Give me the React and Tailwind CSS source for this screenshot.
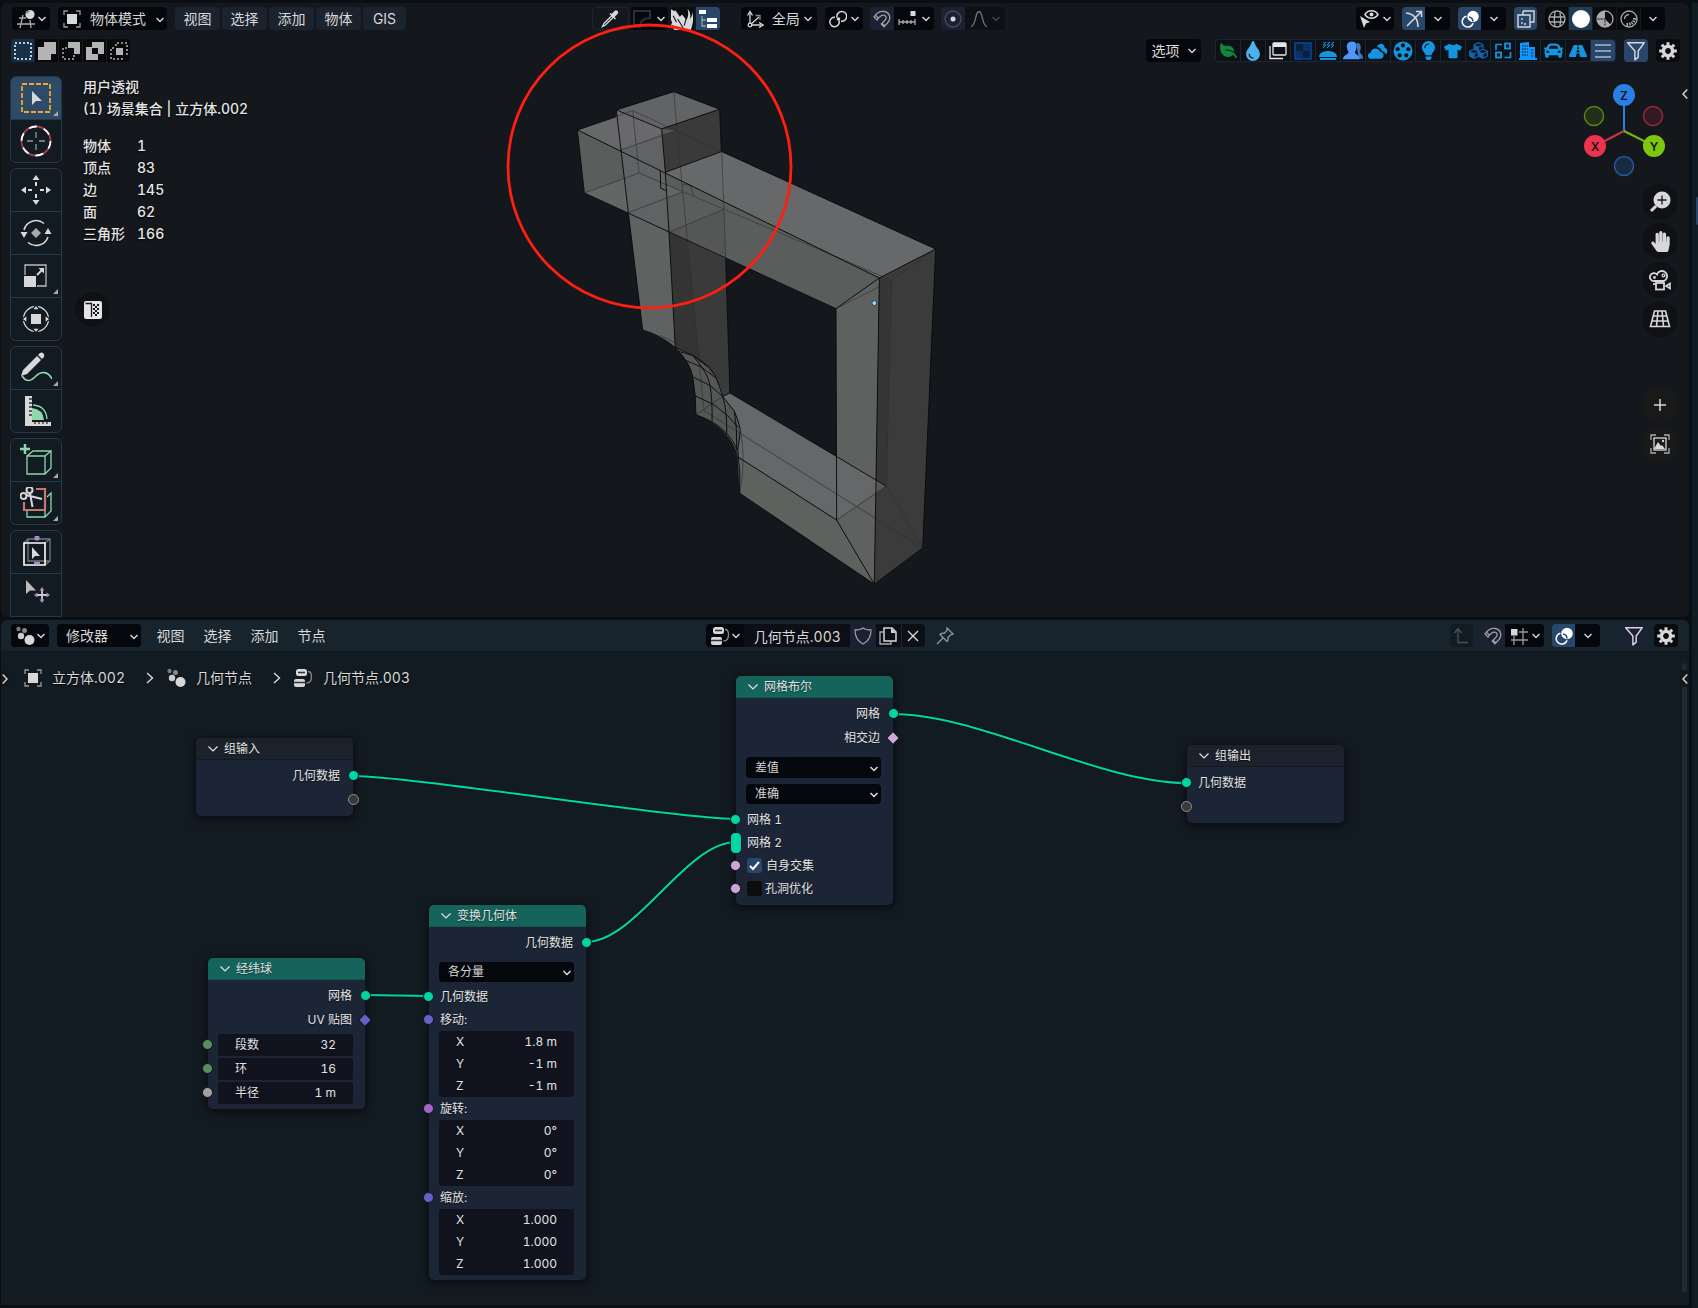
import React from "react";
import clsx from "clsx";
import { FaLeaf, FaTint, FaLightbulb, FaTshirt, FaCubes, FaCar, FaRoad, FaHandPaper } from "react-icons/fa";

/* ---------- icons ---------- */
function Svg({ children, size = "size-[18px]", box = 18, className, ...rest }) {
  return (
    <svg viewBox={`0 0 ${box} ${box}`} className={clsx(size, "shrink-0", className)} fill="none" stroke="currentColor" strokeWidth="1.3" aria-hidden="true" {...rest}>
      {children}
    </svg>
  );
}
const F = { fill: "currentColor", stroke: "none" };

const Chevron = ({ className }) => (
  <svg viewBox="0 0 8 6" className={clsx("h-[6px] w-2 shrink-0", className)} fill="none" stroke="currentColor" strokeWidth="1.4" aria-hidden="true">
    <path d="M.5 1 4 4.600 7.500 1" />
  </svg>
);
/* Handle that opens a hidden side region. */
const RegionArrow = ({ className }) => (
  <svg viewBox="0 0 6 10" className={clsx("h-[10px] w-[6px] shrink-0", className)} fill="none" stroke="currentColor" strokeWidth="1.4" aria-hidden="true">
    <path d="M5.300.600 1 5l4.300 4.400" />
  </svg>
);
const GridBall = () => (
  <Svg size="size-5" box={20}><path d="M3 9h7M1 15h18M7 6 4 19M14 11l1 8" stroke="#aaa" /><circle cx="14" cy="5.500" r="4.600" {...F} /><path d="M10.500 4.500a4 4 0 0 1 3-2.500" stroke="#777" /></Svg>
);
const ObjectIcon = () => (
  <Svg><rect x="4" y="4" width="10" height="10" {...F} /><path d="M1 5V1h4M13 1h4v4M17 13v4h-4M5 17H1v-4" stroke="#999" /></Svg>
);
const GeoNodesDots = () => (
  <Svg size="size-5" box={20}><circle cx="3.500" cy="3" r="2.200" fill="#777" stroke="none" /><circle cx="9.500" cy="4.500" r="2.500" fill="#888" stroke="none" /><circle cx="6" cy="10" r="3.200" fill="#ccc" stroke="none" /><circle cx="14.500" cy="14" r="5" {...F} /></Svg>
);
const NodeTree = () => (
  <Svg size="size-5" box={20}><rect x="3" y="1" width="11" height="7" rx="2.500" {...F} /><path d="M5 4.500h7" stroke="#333" /><rect x="1" y="11" width="11" height="8" rx="2" {...F} /><path d="M1 14.500h11" stroke="#333" /><path d="M15 3.500c3 0 3.500 2 3.500 5s-1 6.500-5 6.500" stroke="#888" /></Svg>
);
const Eyedropper = () => (
  <Svg><path d="M11 5.500 3 13.500 1.500 16.500l3-1.500 8-8" /><path d="m8.500 4 5.500 5.500 1-1-1.500-1.500 3-3a2 2 0 0 0-3-3l-3 3L9.500 3z" {...F} /></Svg>
);
const Axes = () => (
  <Svg><path d="M4 3v12h11" /><path d="M1.500 5.500 4 1.500l2.500 4M13 12.500l4 2.500-4 2.500M4 15l9-8" /><path d="M9.500 5.500h4.500V10" stroke="#888" /><circle cx="4" cy="15" r="1.800" fill="#05070a" /></Svg>
);
const Pivot = () => (
  <Svg><path d="M10 10.500A4.700 4.700 0 1 1 6 7.300M8 7.500A4.900 4.900 0 1 1 12 11.200" strokeWidth="1.500" /><circle cx="9.500" cy="9" r="1.800" {...F} /></Svg>
);
const Magnet = ({ className }) => (
  <Svg className={className}><path d="M1 7C4 2.500 7.500.800 11.500 1.500c5.500 1.300 7 7.500 3 11.500L11 16.800 8.300 14l3.700-3.800c2-2.200 1-4.700-1-5C8.500 4.800 6.500 6.500 4 10zM9 13.300l2.800 2.700M2.600 5.500l3 2.700" /></Svg>
);
const SnapIncrement = () => (
  <Svg><path d="M1 9v6M5 10v4M9 10v4M13 10v4M17 9v6M1 12h16" stroke="#aaa" /><rect x="12.500" y="1" width="5" height="5" {...F} /></Svg>
);
const SnapGrid = () => (
  <Svg><path d="M4 9v9M13 1v17M9 5h9M1 13h17" stroke="#999" /><rect x="1" y="2" width="6.500" height="6.500" {...F} /></Svg>
);
const Overlays = () => (
  <Svg><circle cx="12" cy="6.500" r="5.700" {...F} /><path d="M5.500 6.200a5.500 5.500 0 1 0 6.500 7" strokeWidth="1.500" /><path d="M8 7c2 0 4 2 4 4.500" stroke="#29476b" strokeWidth="1.500" /></Svg>
);
const Gear = () => (
  <Svg><path d="M9 4.400a4.600 4.600 0 1 0 0 9.200 4.600 4.600 0 0 0 0-9.200z" strokeWidth="3.400" /><path d="M9 .2v3M9 14.800v3M.2 9h3M14.800 9h3M2.800 2.800l2 2M13.200 13.200l2 2M15.200 2.800l-2 2M4.800 13.200l-2 2" strokeWidth="3" /></Svg>
);
const Funnel = () => <Svg size="size-5" box={18}><path d="M1.500 1.500h15L11 9v5.500L8 17V9z" strokeWidth="1.300" strokeLinejoin="round" /></Svg>;

/* ---------- header controls ---------- */
function Btn({ label, className, children }) {
  return (
    <button type="button" aria-label={label} className={clsx("flex h-[23px] items-center justify-center", className)}>
      {children}
    </button>
  );
}
function Group({ className, children }) {
  return <div className={clsx("flex h-[23px] shrink-0 overflow-hidden rounded", className)}>{children}</div>;
}
function Select({ label, value, className, selectClass, chevronClass }) {
  return (
    <div className={clsx("relative shrink-0", className)}>
      <select aria-label={label} defaultValue={value} className={clsx("h-full w-full appearance-none rounded bg-[#04070b] text-[#d5d5d5] outline-none", selectClass)}>
        <option>{value}</option>
      </select>
      <Chevron className={clsx("pointer-events-none absolute top-1/2 -mt-[2px]", chevronClass)} />
    </div>
  );
}

const menuA = ["视图", "选择", "添加", "物体"];
const menuB = ["视图", "选择", "添加", "节点"];

const selectModes = [
  ["新建", <path key="a" d="M1 1h16v16H1z" strokeDasharray="2 2" strokeWidth="1.500" stroke="#fff" />],
  ["扩展", <path key="b" d="M6 0h12v12h-5v6H0V5h6z" {...F} />],
  ["减去", <g key="c"><path d="M6 0h12v12h-6V6H6z" {...F} /><path d="M5 6H1v11h11V13" strokeDasharray="2 2" strokeWidth="1.500" /></g>],
  ["反转", <path key="d" fillRule="evenodd" d="M6 0h12v12h-6v6H0V5h6zM6 6v6h6V6z" {...F} />],
  ["相交", <g key="e"><path d="M6 6h7v7H6z" {...F} /><path d="M6 4V1h11v11h-3M4 6H1v11h11v-3" strokeDasharray="2 2" strokeWidth="1.500" /></g>],
];

const filters = [
  ["植物", "text-[#12863c]", <FaLeaf key="i" className="size-[17px] -scale-x-100" />],
  ["液体", "text-[#4db2ec]", <FaTint key="i" className="size-5" />],
  ["窗口", "text-[#e6e6e6]", <Svg key="i"><rect x="4" y="1" width="13" height="12" rx="1" /><path d="M4 1h13v4H4z" {...F} /><path d="M1 4v12.500h13" /></Svg>],
  ["棋盘", "text-[#0c4fa8]", <Svg key="i"><rect x="1" y="1" width="16" height="16" fill="#08203f" /><path d="M2 9h7v7H2zM9 2h7v7H9z" fill="#0a2f63" stroke="none" /></Svg>],
  ["食物", "text-[#1296e0]", <Svg key="i"><path d="M0 15c0-8 18-8 18 0zM1 16h16v2H1z" {...F} /><path d="M4 0h3L4 3h3L4 6M8 0h3L8 3h3L8 6M12 0h3l-3 3h3l-3 3" strokeWidth="1" /></Svg>],
  ["人物", "text-[#4c97f7]", <Svg key="i" size="size-5"><path d="M12 2c4-1 5 4 3 8 1 2 3 2 3 6h-4z" opacity=".75" {...F} /><path d="M8 .5c3.500 0 5 3 4 6-.300 2-1 2.500-1.200 4 .800 2 4.200 2 4.200 6H0c0-4 4-4 5-6-.200-1.500-1-2-1.300-4-1-3 .800-6 4.300-6z" {...F} /></Svg>],
  ["天空", "text-[#1296e0]", <Svg key="i" size="size-5"><path d="M8 5c2-4 7-3 7 1 3 1 3 5 1 6-1-2-2-2.500-3-2.500C12 7 10 6 8 5z" {...F} /><path d="M3 16c-4 0-4-5-.500-5.500C3 5.500 10 5.500 11 10c4 0 4 6 0 6z" {...F} /></Svg>],
  ["影片", "text-[#1296e0]", <Svg key="i" size="size-5"><circle cx="9" cy="9" r="8.500" {...F} /><g fill="#0d1117" stroke="none"><circle cx="9" cy="4" r="1.900" /><circle cx="13.800" cy="7.400" r="1.900" /><circle cx="12" cy="13" r="1.900" /><circle cx="6" cy="13" r="1.900" /><circle cx="4.200" cy="7.400" r="1.900" /></g></Svg>],
  ["灯光", "text-[#1296e0]", <FaLightbulb key="i" className="size-[19px]" />],
  ["服装", "text-[#1296e0]", <FaTshirt key="i" className="size-[18px]" />],
  ["方块", "text-[#1262a8]", <FaCubes key="i" className="size-[19px]" />],
  ["替换", "text-[#1296e0]", <Svg key="i"><rect x="11" y="1.500" width="5" height="5" strokeWidth="1.800" /><rect x="2" y="10.500" width="5" height="5" strokeWidth="1.800" /><path d="M2 8V2.500h6M16.500 10v5.500h-6" strokeWidth="1.600" /></Svg>],
  ["建筑", "text-[#1296ff]", <Svg key="i"><path d="M1 1l9-1v5h6v11h2v2H0v-2h1z" {...F} /><path d="M3 4h6M3 7h6M3 10h6M3 13h6M12 8h3M12 11h3M12 14h3" stroke="#0d1117" strokeWidth="1" strokeDasharray="1.500 1" /></Svg>],
  ["车辆", "text-[#1296e0]", <FaCar key="i" className="size-[19px]" />],
  ["道路", "text-[#1296e0]", <FaRoad key="i" className="size-[18px]" />],
];

/* ---------- 3D viewport tools ---------- */
const green = "#8ed8ab";
const tools = [
  [
    ["框选", true, <g key="t"><rect x="2" y="2" width="28" height="28" stroke="#f0a630" strokeWidth="1.800" strokeDasharray="5 2" /><path d="M12 9v14l4-4h6z" {...F} /></g>],
    ["游标", false, <g key="t"><circle cx="16" cy="16" r="14.500" strokeWidth="1.800" stroke="#a04048" /><circle cx="16" cy="16" r="14.500" strokeWidth="1.800" stroke="#fff" strokeDasharray="8 7.180" /><path d="M16 7v6M16 19v6M7 16h6M19 16h6" stroke="#999" /></g>],
  ],
  [
    ["移动", false, <g key="t"><path d="M16 1l3.500 5h-7zM16 31l3.500-5h-7zM1 16l5-3.500v7zM31 16l-5-3.500v7z" {...F} /><path d="M16 8v4M16 20v4M8 16h4M20 16h4" strokeWidth="2" /></g>],
    ["旋转", false, <g key="t"><path d="M4 13a12.500 12.500 0 0 1 20-6.500M28 20A12.500 12.500 0 0 1 8 25.500" strokeWidth="1.500" /><path d="m16 11 5 5-5 5-5-5z" {...F} fill="#aaa" /><path d="M4 21 .5 15h7zM28 11l3.500 6h-7z" {...F} /></g>],
    ["缩放", false, <g key="t"><path d="M5 15V5h21v21H17" stroke="#bbb" /><path d="M4 16h12v11H4z" {...F} /><path d="m17 15 5-5" strokeWidth="1.800" /><path d="M18.500 8H24v5.500z" {...F} /></g>, true],
    ["变换", false, <g key="t"><circle cx="16" cy="16" r="12.500" /><path d="M11 11h10v10H11z" {...F} /><path d="M16 2l4 5h-8zM16 30l4-5h-8zM2 16l5-4v8zM30 16l-5-4v8z" {...F} stroke="#131c24" /></g>],
  ],
  [
    ["标注", false, <g key="t"><path d="M2 24c5 7 9 5 14 0s12-5 16 3" stroke={green} strokeWidth="1.600" /><path d="M1 24l2-6L17 4l4 4L7 22zM18 3l2-2q2-1 3.500.5t.5 3.500l-2 2z" {...F} /></g>, true],
    ["测量", false, <g key="t"><path d="M12 25V13q11 1 12 12z" fill={green} stroke="none" /><path d="M13 10q13 1 14 14" stroke={green} /><path d="M5 1h7v30H5z" {...F} /><path d="M5 27h26v4H5z" {...F} /><path d="M9 4h3M9 8h3M9 12h3M9 16h3M9 20h3M15 27v2M19 27v2M23 27v2M27 27v2" stroke="#333" /></g>],
  ],
  [
    ["添加立方体", false, <g key="t" stroke={green}><path d="M5 0v10M0 5h10" strokeWidth="2.500" /><path d="M7 12h18v18H7zM7 12l6-5h18l-6 5M31 7v17l-6 6" /></g>, true],
    ["剪切", false, <g key="t"><path d="M7 24v6h18v-6M27 10l4-4v18l-6 6" stroke={green} /><path d="M16 2h9v21H4v-8" stroke="#c8766e" strokeWidth="2.200" /><circle cx="9.500" cy="3" r="3" strokeWidth="2" /><circle cx="3.500" cy="9" r="3" strokeWidth="2" /><path d="m10 6 2.500 14M6 8l16 4" strokeWidth="2" /></g>, true],
  ],
  [
    ["框架", false, <g key="t"><path d="M8 3h22v22H8zM8 3 4 7M30 3l-5 4M30 25l-5 4" stroke="#777" /><path d="M4 7h21v22H4z" stroke="#fff" strokeWidth="1.600" /><circle cx="17" cy="2" r="2.600" fill="#ad87cd" stroke="none" /><path d="M14 27h6" stroke="#ad87cd" strokeWidth="2.500" /><path d="M12 11v12l3-3h5z" {...F} /></g>],
    ["微调", false, <g key="t"><path d="M6 1v14l4-3.500h6z" {...F} fill="#bbb" /><path d="M22 11v10M17 16h10" stroke="#ccc" strokeWidth="1.800" /><path d="m22 8 2.500 3.500h-5zM22 24l2.500-3.500h-5zM14 16l3.500-2.500v5zM30 16l-3.500-2.500v5z" fill="#ad87cd" stroke="none" /></g>],
    ["更多", false, null],
  ],
];

const stats = [["物体", "1"], ["顶点", "83"], ["边", "145"], ["面", "62"], ["三角形", "166"]];

/* Translucent mesh with x-ray wireframe, plus the red annotation stroke. */
function Scene() {
  return (
    <svg viewBox="1 3 1688 614" className="pointer-events-none absolute top-0 left-0 h-[614px] w-[1688px] max-w-none" fill="none" aria-label="立方体.002" role="img">
      <g transform="translate(500 60) scale(.33333 .34439)" strokeLinejoin="round">
        <path d="M232 203 398 147 665 266 1307 549 1138 633z" fill="#67686a" />
        <path d="M232 203 1138 633 1008 722 253 386z" fill="#5b5d5c" />
        <path d="M253 386 417 328 548 383 385 443z" fill="#646665" />
        <path d="M507 500 677 577 690 967 668 977Q640 900 580 860L526 835z" fill="#3b3a3a" />
        <path d="M507 500 562 525 600 880 526 835z" fill="#343434" />
        <path d="M385 443 507 500 526 835Q480 798 428 784z" fill="#606262" />
        <path d="M349 145 485 200 496 326 507 500 385 443z" fill="#606263" />
        <path d="M349 145 521 92 659 143 485 200z" fill="#626364" />
        <path d="M360 262 485 215 528 205 485 200 349 145z" fill="#69696b" />
        <path d="M485 200 659 143 664 266 496 326z" fill="#3a3a3a" />
        <path d="M485 200 528 205 488 218z" fill="#565657" />
        <path d="M507 500 672 433 677 577z" fill="#555656" />
        <path d="M1138 633 1123 1522 1010 1336 1008 722z" fill="#5f6160" />
        <path d="M1307 549 1268 1417 1123 1522 1138 633z" fill="#3c3b3b" />
        <path d="M1138 633 1175 640 1159 1237 1129 1220z" fill="#363636" />
        <path d="M690 967 1158 1237 1010 1336 713 1152 720 1080 703 1020 668 977z" fill="#666769" />
        <path d="M1129 1220 1158 1237 1128 1257z" fill="#565656" />
        <path d="M713 1152 1010 1336 1123 1522 719 1258z" fill="#5f615f" />
        <path d="M428 784Q480 798 526 835Q572 880 578 920Q588 970 588 1030Q690 1065 714 1152L722 1080Q715 1040 703 1020L668 977Q645 900 600 870Q570 850 526 835Q480 800 428 784z" fill="#555757" />

        <g stroke="#303132" strokeOpacity=".6" strokeWidth="3">
          <path d="M398 147 417 328 253 386M398 147 665 266M232 203 398 147 M360 262 530 205M521 92 548 383 612 1018 1268 1417 1159 1237 1175 640 1008 722M385 443 548 383M507 500 672 433 665 266M417 328 672 433 1175 640M548 360 572 365 580 393M672 433 677 577M1307 549 1175 640M1159 1237 1010 1336M588 1030 668 977M722 1080Q738 1160 719 1258M480 800Q600 850 640 915" />
        </g>
        <g stroke="#0b0c0d" strokeWidth="2.800">
          <path d="M349 145 521 92 659 143 485 200zM659 143 664 266 496 326 485 200M665 266 1307 549 1268 1417 1123 1522 719 1258M1307 549 1138 633 232 203 253 386 1008 722 1138 633 1123 1522 1010 1336 1008 722M232 203 348 165M349 145 385 443 428 784Q480 798 526 835M496 326 507 500 526 835M481 320 482 372 497 379M677 577 690 967 668 977M690 967 1158 1237M713 1152 1010 1336" />
          <path d="M526 835Q572 880 578 920Q588 970 588 1030Q690 1065 714 1140Q722 1200 719 1258M526 835Q620 870 645 915Q660 950 668 977M668 977 703 1020Q725 1070 720 1085L712 1140M536 846 578 858 622 890M556 872 605 892 645 922M578 920 630 945 668 977M587 976 640 1000 682 1032 714 1066M578 858Q625 910 630 945Q638 990 636 1052M668 977Q682 1020 680 1088M703 1020Q712 1070 710 1130" />
        </g>
        <ellipse cx="1123" cy="706" rx="7" ry="7" fill="#8ddcff" stroke="#123" strokeWidth="2" />
      </g>
      <circle cx="649.500" cy="166.500" r="141.500" stroke="#ff1f12" strokeWidth="2.800" />
    </svg>
  );
}

function Gizmo() {
  const end = "#14171c";
  return (
    <svg viewBox="1582 84 84 94" className="mt-2 mr-3 h-[94px] w-[84px]" fill="none" strokeWidth="1.500" fontFamily="Inter" fontWeight="600" fontSize="12" textAnchor="middle" role="img" aria-label="坐标轴">
      <circle cx="1594" cy="116" r="9.500" fill="#22301a" stroke="#56841a" />
      <circle cx="1653" cy="116" r="9.500" fill="#331a22" stroke="#96273c" />
      <circle cx="1624" cy="166" r="9.500" fill="#182a42" stroke="#235a9e" />
      <path d="M1624 131V95" stroke="#2c7fe0" strokeWidth="2" />
      <path d="m1624 131-29 15" stroke="#c8334a" strokeWidth="2" />
      <path d="m1624 131 30 15" stroke="#74b810" strokeWidth="2" />
      <circle cx="1624" cy="95" r="11" fill="#2a7fe6" />
      <circle cx="1595" cy="146" r="11" fill="#ee334f" />
      <circle cx="1654" cy="146" r="11" fill="#7dc80c" />
      <text x="1624" y="99.500" fill={end}>Z</text>
      <text x="1595" y="150.500" fill={end}>X</text>
      <text x="1654" y="150.500" fill={end}>Y</text>
    </svg>
  );
}

const navButtons = [
  ["缩放视图", <Svg key="n" size="size-[22px]" box={22}><circle cx="13" cy="9" r="8.500" {...F} /><path d="m7 15-5 5" strokeWidth="3" /><path d="M13 4.500v9M8.500 9h9" stroke="#14171c" /></Svg>],
  ["平移视图", <FaHandPaper key="n" className="size-[21px]" />],
  ["摄像机视图", <Svg key="n" size="size-[22px]" box={22}><path d="M5.500 12A4 4 0 1 1 8 5.500a5.200 5.200 0 1 1 7 6.500z" strokeWidth="1.800" /><circle cx="14.500" cy="6.500" r="1.400" /><circle cx="5.500" cy="8.500" r=".8" /><rect x="7" y="14" width="8" height="6.500" strokeWidth="1.800" /><path d="M4 15h3" strokeWidth="1.800" /><path d="m17 17 4-2.500v5z" strokeWidth="1.600" /></Svg>],
  ["透视/正交", <Svg key="n" size="size-[22px]" box={22}><path d="M5.500 3h11l4 15.500h-19zM4 8h14M3 13h16.500M9 3 7.500 18M13 3l1.500 15" strokeWidth="1.600" /></Svg>],
];

function Viewport() {
  const dark = "bg-[#04070b]";
  return (
    <section className="relative flex min-h-0 flex-col overflow-hidden rounded-md bg-[#14171c]" aria-label="3D 视图">
      <div className="flex pt-1 pr-6 pl-[11px]">
        <Btn label="编辑器类型" className={clsx(dark, "w-[38px] shrink-0 gap-0.5 rounded")}><GridBall /><Chevron /></Btn>
        <div className="relative ml-2">
          <span className="pointer-events-none absolute top-[3px] left-[5px] z-10"><ObjectIcon /></span>
          <Select label="模式" value="物体模式" className="h-[23px] w-[109px]" selectClass="pl-8" chevronClass="right-[3px]" />
        </div>
        <nav className="ml-2 flex gap-0.5">
          {menuA.map((m) => <button key={m} type="button" className="h-[23px] w-[45px] rounded bg-[#1a232e]">{m}</button>)}
          <button type="button" className="h-[23px] w-[43px] rounded bg-[#1a232e]">GIS</button>
        </nav>
        <div className="flex-[186]" />
        <Btn label="吸管" className="w-[37px] rounded border border-[#1c2534]"><Eyedropper /></Btn>
        <Btn label="材质" className={clsx(dark, "ml-0.5 w-[37px] gap-1.5 rounded")}><Svg className="text-[#2c3036]" strokeWidth="2"><path d="M17 1H1v16h6c0-6 4-9 10-9z" /></Svg><Chevron /></Btn>
        <Group className="ml-[3px] gap-0.5">
          <Btn label="毛发" className="w-[23px] bg-[#0a0c10]"><Svg size="size-[22px]" box={20}><path d="M0 1l3 2 1-1 4 6 2-2 4 5c2-3 2-7 1-10 3 3 3 6 2 9 2-2 3-5 3-8 1 7 0 12-2 18H3L0 16l1-3-1-2z" {...F} /><path d="m2 7 3 6M6 10l5 8M14 9l-2 7M1 16l4 2" stroke="#14171c" strokeWidth="1" /></Svg></Btn>
          <Btn label="层级" className="w-6 bg-[#29476b] text-white"><Svg size="size-5" box={20}><path d="M1 1h7v4H1zM9 9h10v4H9zM9 15h10v4H9z" {...F} /><path d="M4 7v10h4M4 11h4" stroke="#8aa" /></Svg></Btn>
        </Group>
        <Btn label="坐标系" className={clsx(dark, "ml-[21px] w-[76px] shrink-0 gap-2 rounded")}><Axes />全局<Chevron className="-ml-1" /></Btn>
        <Btn label="轴心点" className={clsx(dark, "ml-2 w-[38px] gap-1 rounded")}><Pivot /><Chevron /></Btn>
        <Group className="ml-[7px]">
          <Btn label="吸附" className="w-6 bg-[#1b2133] text-[#a0a0a0]"><Magnet /></Btn>
          <Btn label="吸附至" className={clsx(dark, "w-10 gap-1.5")}><SnapIncrement /><Chevron /></Btn>
        </Group>
        <Group className="ml-[7px]">
          <Btn label="衰减编辑" className="w-6 bg-[#1b2133]"><Svg><circle cx="9" cy="9" r="8" stroke="#4a4e58" /><circle cx="9" cy="9" r="2.500" {...F} /></Svg></Btn>
          <Btn label="衰减类型" className="w-10 gap-1 bg-[#0d1014] text-[#777]"><Svg><path d="M1 16.500c5 0 4-15 8-15s3 15 8 15" /></Svg><Chevron className="opacity-50" /></Btn>
        </Group>
        <div className="flex-[352]" />
        <Btn label="可见性" className={clsx(dark, "w-[38px] gap-1 rounded")}><Svg size="size-5" box={20}><path d="M6 5.500c3-5 10-5 13 0-3 5-10 5-13 0z" strokeWidth="1.500" /><circle cx="12.500" cy="5.500" r="2" {...F} /><path d="m1 7 10 6-4 1.500L5 19z" {...F} /></Svg><Chevron /></Btn>
        <Group className="ml-2">
          <Btn label="Gizmo" className="w-[23px] bg-[#29476b]"><Svg><path d="M1 3c8 1 12 6 12 14M2 16 16 2M11 1.500h5.500V7" strokeWidth="1.500" /></Svg></Btn>
          <Btn label="Gizmo 选项" className={clsx(dark, "w-[25px]")}><Chevron /></Btn>
        </Group>
        <Group className="ml-2">
          <Btn label="叠加层" className="w-[23px] bg-[#29476b] text-white"><Overlays /></Btn>
          <Btn label="叠加层选项" className={clsx(dark, "w-[25px]")}><Chevron /></Btn>
        </Group>
        <Btn label="透视模式" className="ml-2 w-[23px] rounded bg-[#29476b]"><Svg><path d="M6 1h11v11h-4M6 1v4M1 5h12v12H1z" strokeWidth="1.400" /><path d="M5 8v6h6" strokeDasharray="2 2" /></Svg></Btn>
        <Group className="ml-2 gap-px bg-[#181a1e]">
          <Btn label="线框" className="w-[23px] bg-[#090b0f]"><Svg stroke="#aaa"><circle cx="9" cy="9" r="8" /><path d="M1.500 7h15M1.500 12h15M7 1.500c-1 5-1 10 0 15M12 2c1 5 1 9 0 14" /></Svg></Btn>
          <Btn label="实体" className="w-[23px] bg-[#1e3c55] text-white"><Svg><circle cx="9" cy="9" r="9" {...F} /></Svg></Btn>
          <Btn label="材质预览" className="w-[23px] bg-[#090b0f]"><Svg stroke="#aaa"><circle cx="9" cy="9" r="8" /><path d="M9 1v8l6 6A8.500 8.500 0 0 1 9 17 8 8 0 0 1 1 9a8 8 0 0 1 8-8z" fill="#aaa" stroke="none" /><path d="M1.500 9H9v7.500" stroke="#333" strokeDasharray="2 1" /></Svg></Btn>
          <Btn label="渲染" className="w-[23px] bg-[#090b0f]"><Svg stroke="#aaa"><circle cx="9" cy="9" r="8" /><path d="M4.500 9A4.500 4.500 0 0 1 9 4.500" /><path d="M14.500 8q0 6-8 6.500" strokeDasharray="1.500 1" strokeWidth="3" /></Svg></Btn>
          <Btn label="着色选项" className={clsx(dark, "w-6")}><Chevron /></Btn>
        </Group>
      </div>

      <div className="mt-[9px] flex justify-between pr-[9px] pl-[10px]">
        <Group className="gap-px bg-[#1b1d21]">
          {selectModes.map(([name, shape], i) => (
            <Btn key={name} label={name} className={clsx("w-[23px]", i === 0 ? "bg-[#163049]" : "bg-[#090a0c] text-[#b4b4b4]")}><Svg>{shape}</Svg></Btn>
          ))}
        </Group>
        <div className="flex">
          <Btn label="选项" className={clsx(dark, "w-[55px] shrink-0 gap-2 rounded")}>选项<Chevron /></Btn>
          <Group className="ml-[14px] gap-px border border-[#1c2534] bg-[#1c2534]">
            {filters.map(([name, color, icon]) => <Btn key={name} label={name} className={clsx("-mt-px w-6 bg-[#0d1117]", color)}>{icon}</Btn>)}
            <Btn label="列表" className="-mt-px w-6 bg-[#29476b]"><Svg><path d="M1 3h16M1 9h16M1 15h16" stroke="#aab8cc" /></Svg></Btn>
          </Group>
          <Btn label="过滤" className="ml-2 w-6 rounded bg-[#29476b]"><Funnel /></Btn>
          <Btn label="设置" className="ml-2 w-6 rounded bg-[#090b0f]"><Gear /></Btn>
        </div>
      </div>

      <div className="mt-[14px] flex min-h-0 flex-1 items-start pl-[9px]">
        <div className="flex w-[52px] flex-col gap-[5px] self-stretch overflow-hidden">
          {tools.map((group, gi) => (
            <div key={gi} className="flex shrink-0 flex-col divide-y divide-[#24384a] overflow-hidden rounded-md border border-[#24384a] bg-[#131b22]">
              {group.map(([name, active, shape, corner]) => (
                <button key={name} type="button" aria-label={name} className={clsx("relative box-content flex h-[42px] items-center justify-center", active && "bg-[#2d4a66]")}>
                  <Svg size="size-8" box={32}>{shape}</Svg>
                  {(corner || active) && <span className="absolute right-[3px] bottom-[3px] size-[5px] bg-[#aaa] [clip-path:polygon(100%_0,100%_100%,0_100%)]" />}
                </button>
              ))}
            </div>
          ))}
        </div>

        <div className="ml-[21px] leading-[22px] font-medium text-[#e4e4e4] [text-shadow:0_1px_2px_#000]">
          <p>用户透视</p>
          <p>(1) 场景集合 | 立方体.002</p>
          <dl className="mt-[15px] grid grid-cols-[54px_auto]">
            {stats.map(([k, v]) => (
              <React.Fragment key={k}><dt>{k}</dt><dd>{v}</dd></React.Fragment>
            ))}
          </dl>
          <button type="button" aria-label="贴图" className="mt-[47px] -ml-2 flex size-[35px] items-center justify-center rounded-full bg-[#101115]">
            <Svg size="size-5" box={20}><rect x="1" y="1" width="18" height="18" rx="2" {...F} /><path d="M2.500 3.500h6V17" stroke="#14171c" /><path d="M10 4h2v2h-2zM14 4h2v2h-2zM12 6h2v2h-2zM10 8h2v2h-2zM14 8h2v2h-2zM12 10h2v2h-2zM10 12h2v2h-2zM14 12h2v2h-2zM12 14h2v2h-2z" fill="#14171c" stroke="none" /></Svg>
          </button>
        </div>

        <div className="ml-auto flex flex-col items-end gap-[3px] pr-[11px]">
          <Gizmo />
          <div className="mt-[3px] flex flex-col gap-[3px]">
            {navButtons.map(([name, icon]) => (
              <button key={name} type="button" aria-label={name} className="flex size-9 items-center justify-center rounded-full bg-[#101115]">{icon}</button>
            ))}
          </div>
          <div className="mt-[47px] flex flex-col gap-[3px]">
            <button type="button" aria-label="添加" className="flex size-9 items-center justify-center rounded-full bg-[#191919]"><Svg><path d="M9 3v12M3 9h12" strokeWidth="1.500" /></Svg></button>
            <button type="button" aria-label="截图" className="flex size-9 items-center justify-center rounded-full bg-[#191919]"><Svg size="size-5" box={20}><path d="M1 6V1h5M14 1h5v5M19 14v5h-5M6 19H1v-5" stroke="#aaa" /><rect x="4" y="4" width="12" height="12" /><path d="m4 15 4-7 3 4 1-1 3 4z" {...F} /><circle cx="13" cy="7" r="1.200" {...F} /></Svg></button>
          </div>
        </div>
      </div>
      <button type="button" aria-label="展开侧栏" className="absolute top-[82px] right-0 flex h-[17px] w-[9px] items-center justify-center"><RegionArrow /></button>
      <Scene />
    </section>
  );
}

/* ---------- node editor ---------- */
const sockets = {
  geo: "bg-[#00d6a3] rounded-full",
  vec: "bg-[#6363c7] rounded-full",
  rot: "bg-[#a663c7] rounded-full",
  int: "bg-[#598c5c] rounded-full",
  float: "bg-[#a1a1a1] rounded-full",
  bool: "bg-[#cca6d6] rounded-full",
  boolField: "bg-[#cca6d6] rotate-45 rounded-[1px]",
  vecField: "bg-[#6363c7] rotate-45 rounded-[1px]",
  empty: "bg-[#3a3938] rounded-full",
};
function Socket({ kind, side }) {
  if (kind === "multi") return <span className="absolute top-px -left-[6px] h-[22px] w-3 rounded-[5px] border border-[#0c141b] bg-[#00d6a3]" />;
  return (
    <span
      className={clsx(
        "absolute top-1/2 border",
        kind.endsWith("Field") ? "-mt-[5px] size-[10px]" : "-mt-[6px] size-[11px]",
        kind === "empty" ? "border-[#8f8f8f]" : "border-[#0c141b]",
        side === "right" ? (kind.endsWith("Field") ? "-right-[5px]" : "-right-[6px]") : "-left-[6px]",
        sockets[kind]
      )}
    />
  );
}
function Row({ out, kind, children }) {
  return (
    <div className={clsx("relative flex h-[23px] items-center", out ? "justify-end pr-[13px]" : "pl-[11px]")}>
      {children}
      <Socket kind={kind} side={out ? "right" : "left"} />
    </div>
  );
}
function Node({ title, plain, className, children }) {
  return (
    <article className={clsx("absolute w-[157px] rounded-[5px] bg-[#1b2535] pb-[5px] text-xs leading-4 text-[#e2e2e2] shadow-[0_2px_8px_2px_rgba(0,0,0,0.5)] [text-shadow:0_1px_1px_rgba(0,0,0,0.5)]", className)}>
      <header className={clsx("flex h-[22px] items-center gap-1.5 rounded-t-[5px] border-b pl-3", plain ? "border-[#141a22] bg-[#1c222b]" : "border-[#12564f] bg-[#14645c]")}>
        <svg viewBox="0 0 10 6" className="h-[6px] w-[10px]" fill="none" stroke="currentColor" strokeWidth="1.200" aria-hidden="true"><path d="m.5.5 4.500 4.500L9.500.5" /></svg>
        <h2>{title}</h2>
      </header>
      <div className="flex flex-col pt-1">{children}</div>
    </article>
  );
}
function Field({ label, value }) {
  return (
    <label className="flex h-[22px] items-center px-[17px]">
      <span className="shrink-0">{label}</span>
      <input type="text" defaultValue={value} className="w-0 min-w-0 flex-1 bg-transparent text-right outline-none" />
    </label>
  );
}
function Vector({ title, kind, values }) {
  return (
    <fieldset>
      <Row kind={kind}>{title}</Row>
      <div className="mr-3 ml-[10px] rounded-[3px] bg-[#10131e]">
        {["X", "Y", "Z"].map((a, i) => <Field key={a} label={a} value={values[i]} />)}
      </div>
    </fieldset>
  );
}
const nodeSelect = { selectClass: "pl-[9px]", chevronClass: "right-[3px]" };

function Crumb({ icon, children }) {
  return <span className="flex items-center gap-2.5">{icon}{children}</span>;
}
const CrumbSep = () => (
  <svg viewBox="0 0 8 12" className="ml-[9px] h-3 w-2" fill="none" stroke="currentColor" strokeWidth="1.400" aria-hidden="true"><path d="m1 1 5.500 5L1 11" /></svg>
);

function NodeEditor() {
  const dark = "bg-[#04070b]";
  return (
    <section className="flex min-h-0 flex-col overflow-hidden rounded-t-md bg-[#131b22]" aria-label="几何节点编辑器">
      <div className="flex h-[31px] shrink-0 items-center bg-[#17242e] pr-[11px] pl-[10px]">
        <Btn label="编辑器类型" className={clsx(dark, "w-[38px] shrink-0 gap-0.5 rounded")}><GeoNodesDots /><Chevron /></Btn>
        <Select label="节点组类型" value="修改器" className="ml-2 h-[23px] w-[84px]" selectClass="pl-[9px]" chevronClass="right-[3px]" />
        <nav className="ml-[7px] flex gap-0.5">
          {menuB.map((m) => <button key={m} type="button" className="h-[23px] w-[45px]">{m}</button>)}
        </nav>
        <div className="flex-[371]" />
        <Group>
          <Btn label="浏览节点树" className={clsx(dark, "w-[38px] gap-0.5")}><NodeTree /><Chevron /></Btn>
          <input type="text" aria-label="节点树名称" defaultValue="几何节点.003" className="h-[23px] w-[106px] bg-[#0c0f16] pl-[10px] outline-none" />
          <Btn label="伪用户" className="w-[26px] bg-[#1b2133] text-[#999]"><Svg><path d="M9 1c2 1.500 5 2 8 2 0 7-2 11-8 14C3 14 1 10 1 3c3 0 6-.5 8-2z" /></Svg></Btn>
          <Btn label="复制" className="w-[25px] bg-[#0c0f16]"><Svg><path d="M4 5H1v12h11v-3" stroke="#aaa" /><path d="M5 1h8l4 4v9H5z" strokeWidth="1.500" /><path d="M12 1v5h5z" {...F} /></Svg></Btn>
          <Btn label="移除" className="w-6 border-l border-[#1c2534] bg-[#0c0f16]"><Svg><path d="m4 4 10 10M14 4 4 14" strokeWidth="1.400" /></Svg></Btn>
        </Group>
        <Btn label="固定" className="ml-2 w-6 text-[#8f969c]"><Svg><path d="m11 1 6 6-2 .5-3 3c.5 2 0 3-1 4L4 7.500c1-1 2.500-1.500 4-1l3-3zM7 11l-6 6" /></Svg></Btn>
        <div className="flex-[492]" />
        <Btn label="上一级" className="w-[23px] rounded bg-[#131b22] text-[#4a5157]"><Svg><path d="M5 2v13.500h10M1.500 6 5 1.500 8.500 6" /></Svg></Btn>
        <Group className="ml-2">
          <Btn label="吸附" className="w-6 bg-[#1b2133] text-[#a0a0a0]"><Magnet /></Btn>
          <Btn label="吸附选项" className={clsx(dark, "w-[39px] gap-1")}><SnapGrid /><Chevron /></Btn>
        </Group>
        <Group className="ml-2">
          <Btn label="叠加层" className="w-[23px] bg-[#29476b] text-white"><Overlays /></Btn>
          <Btn label="叠加层选项" className={clsx(dark, "w-[25px]")}><Chevron /></Btn>
        </Group>
        <Btn label="过滤" className="ml-[22px] w-6 rounded bg-[#1b2133]"><Funnel /></Btn>
        <Btn label="设置" className="ml-2 w-6 rounded bg-[#090b0f]"><Gear /></Btn>
      </div>

      <div className="relative min-h-0 flex-1 overflow-hidden">
        <div className="flex h-[54px] items-center gap-3 pl-[23px] [text-shadow:0_1px_1px_#000]">
          <Crumb icon={<ObjectIcon />}>立方体.002</Crumb>
          <CrumbSep />
          <Crumb icon={<GeoNodesDots />}>几何节点</Crumb>
          <CrumbSep />
          <Crumb icon={<NodeTree />}>几何节点.003</Crumb>
        </div>
        <button type="button" aria-label="展开工具栏" className="absolute top-[19px] left-0 flex h-[17px] w-2 items-center justify-center rounded-r bg-[#14171c]"><RegionArrow className="rotate-180" /></button>

        <svg viewBox="1 651 1688 654" className="pointer-events-none absolute top-0 left-0 h-[654px] w-[1688px] max-w-none" fill="none" aria-hidden="true">
          <g stroke="#0c141b" strokeWidth="4">
            <path d="M353 776C410 776 679 819 736 819M893 714C979 714 1100 783 1186 783M586 942C636 942 686 842 736 842M365 995 429 996" />
          </g>
          <g stroke="#00d6a3" strokeWidth="2">
            <path d="M353 776C410 776 679 819 736 819M893 714C979 714 1100 783 1186 783M586 942C636 942 686 842 736 842M365 995 429 996" />
          </g>
        </svg>

        <Node title="组输入" plain className="top-[87px] left-[195px]">
          <div className="flex flex-col gap-px">
            <Row out kind="geo">几何数据</Row>
            <Row out kind="empty" />
          </div>
        </Node>

        <Node title="网格布尔" className="top-[25px] left-[735px]">
          <div className="flex flex-col gap-px">
            <Row out kind="geo">网格</Row>
            <Row out kind="boolField">相交边</Row>
          </div>
          <Select label="运算" value="差值" className="mt-2 mr-3 ml-[10px] h-[21px]" {...nodeSelect} />
          <Select label="解算器" value="准确" className="mt-1.5 mr-3 mb-1 ml-[10px] h-5" {...nodeSelect} />
          <Row kind="geo">网格 1</Row>
          <Row kind="multi">网格 2</Row>
          <Row kind="bool">
            <label className="flex items-center gap-1">
              <span className="relative flex">
                <input type="checkbox" defaultChecked className="peer size-[15px] appearance-none rounded-[3px] bg-[#0d0d0d] checked:bg-[#29476b]" />
                <svg viewBox="0 0 15 15" className="absolute inset-0 size-[15px]" fill="none" stroke="#fff" strokeWidth="2" aria-hidden="true"><path d="m3 8 3 3 6-7" /></svg>
              </span>
              自身交集
            </label>
          </Row>
          <Row kind="bool">
            <label className="flex items-center gap-[3px]">
              <input type="checkbox" className="size-[15px] appearance-none rounded-[3px] bg-[#0d0d0d]" />
              孔洞优化
            </label>
          </Row>
        </Node>

        <Node title="组输出" plain className="top-[94px] left-[1186px]">
          <div className="flex flex-col gap-px">
            <Row kind="geo">几何数据</Row>
            <Row kind="empty" />
          </div>
        </Node>

        <Node title="变换几何体" className="top-[254px] left-[428px]">
          <Row out kind="geo">几何数据</Row>
          <Select label="模式" value="各分量" className="mt-2 mr-3 mb-[3px] ml-[10px] h-5" {...nodeSelect} />
          <Row kind="geo">几何数据</Row>
          <Vector title="移动:" kind="vec" values={["1.8 m", "-1 m", "-1 m"]} />
          <Vector title="旋转:" kind="rot" values={["0°", "0°", "0°"]} />
          <Vector title="缩放:" kind="vec" values={["1.000", "1.000", "1.000"]} />
        </Node>

        <Node title="经纬球" className="top-[307px] left-[207px]">
          <div className="mb-[3px] flex flex-col gap-px">
            <Row out kind="geo">网格</Row>
            <Row out kind="vecField">UV 贴图</Row>
          </div>
          <div className="flex flex-col gap-0.5">
            {[["段数", "32", "int"], ["环", "16", "int"], ["半径", "1 m", "float"]].map(([label, value, kind]) => (
              <div key={label} className="relative pr-3 pl-[10px]">
                <div className="rounded-[3px] bg-[#10131e]"><Field label={label} value={value} /></div>
                <Socket kind={kind} side="left" />
              </div>
            ))}
          </div>
        </Node>

        <div className="absolute top-3 right-0.5 bottom-3 w-[5px] rounded-full bg-[#1f2933]" />
        <button type="button" aria-label="展开侧栏" className="absolute top-[19px] right-0 flex h-[17px] w-[9px] items-center justify-center bg-[#14171c]"><RegionArrow /></button>
      </div>
    </section>
  );
}

export default function App() {
  return (
    <main className="grid h-screen grid-cols-[minmax(0,1fr)_6px] gap-[3px] overflow-hidden bg-[#0a0f13] pt-[3px] pl-px font-['Inter','Noto_Sans_CJK_SC',sans-serif] text-sm leading-5 text-[#d8d8d8] tabular-nums">
      <div className="grid min-h-0 grid-rows-[614fr_685fr] gap-[3px] pb-[3px]">
        <Viewport />
        <NodeEditor />
      </div>
      <aside className="bg-[#101c24] pt-[194px]">
        <div className="ml-1 h-7 rounded-l bg-[#29476b]" />
      </aside>
    </main>
  );
}
